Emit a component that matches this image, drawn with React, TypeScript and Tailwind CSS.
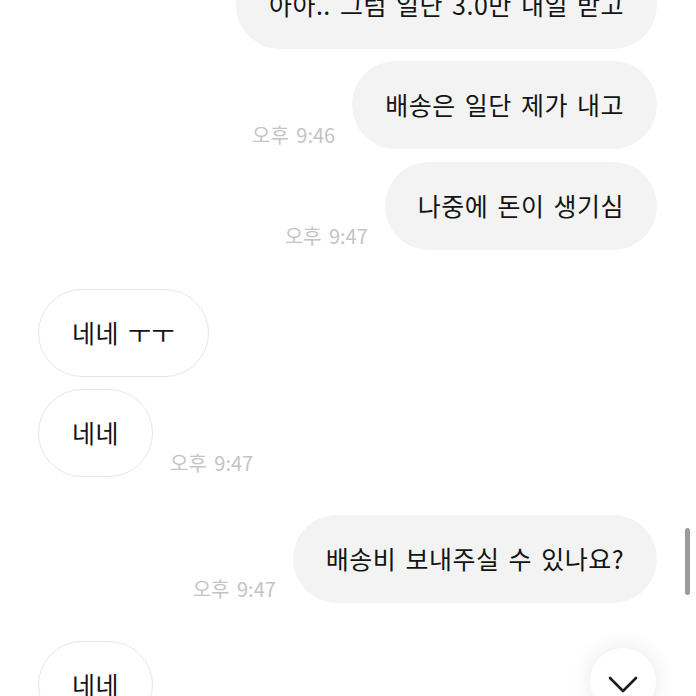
import React from "react";

type Msg = {
  side: "left" | "right";
  text: string;
  time?: string;
  mt: string;
};

const msgs: Msg[] = [
  { side: "right", text: "아아.. 그럼 일단 3.0만 내일 받고", mt: "mt-[-39px]" },
  { side: "right", text: "배송은 일단 제가 내고", time: "오후 9:46", mt: "mt-[12px]" },
  { side: "right", text: "나중에 돈이 생기심", time: "오후 9:47", mt: "mt-[13px]" },
  { side: "left", text: "네네 ㅜㅜ", mt: "mt-[39px]" },
  { side: "left", text: "네네", time: "오후 9:47", mt: "mt-[12px]" },
  { side: "right", text: "배송비 보내주실 수 있나요?", time: "오후 9:47", mt: "mt-[38px]" },
  { side: "left", text: "네네", mt: "mt-[38px]" },
];

function Time({ t }: { t: string }) {
  return (
    <span className="mb-[2px] text-[20px] leading-[24px] text-[#c4c4c4] whitespace-nowrap [word-spacing:3px]">
      {t}
    </span>
  );
}

function Row({ m }: { m: Msg }) {
  const bubble =
    m.side === "right" ? (
      <div className="h-[88px] shrink-0 rounded-full bg-[#f3f3f3] px-[33px] flex items-center text-[25px] tracking-[0.5px] [word-spacing:3px] text-[#141414] whitespace-nowrap">
        {m.text}
      </div>
    ) : (
      <div className="h-[88px] shrink-0 rounded-full border border-[#e6e6e6] bg-white px-[33px] flex items-center text-[25px] tracking-[0.5px] [word-spacing:3px] text-[#141414] whitespace-nowrap">
        {m.text}
      </div>
    );
  return (
    <div
      className={`${m.mt} flex items-end gap-[17px] ${
        m.side === "right" ? "justify-end" : "justify-start"
      }`}
    >
      {m.side === "right" && m.time && <Time t={m.time} />}
      {bubble}
      {m.side === "left" && m.time && <Time t={m.time} />}
    </div>
  );
}

export default function App() {
  return (
    <div className="relative h-[696px] w-[696px] overflow-hidden bg-white font-['Noto_Sans_CJK_KR',sans-serif]">
      <div className="flex flex-col pl-[38px] pr-[39px]">
        {msgs.map((m, i) => (
          <Row key={i} m={m} />
        ))}
      </div>
      <div className="absolute left-[685px] top-[528px] h-[67px] w-[5px] rounded-full bg-[#9b9b9b]" />
      <div className="absolute left-[590px] top-[648px] flex h-[66px] w-[66px] items-start justify-center rounded-full bg-white shadow-[0_0_22px_rgba(0,0,0,0.10)]">
        <svg
          className="mt-[28px]"
          width="30"
          height="17"
          viewBox="0 0 30 17"
          fill="none"
          stroke="#1a1a1a"
          strokeWidth="2.6"
          strokeLinecap="round"
          strokeLinejoin="round"
        >
          <path d="M2 2 L15 15 L28 2" />
        </svg>
      </div>
    </div>
  );
}
